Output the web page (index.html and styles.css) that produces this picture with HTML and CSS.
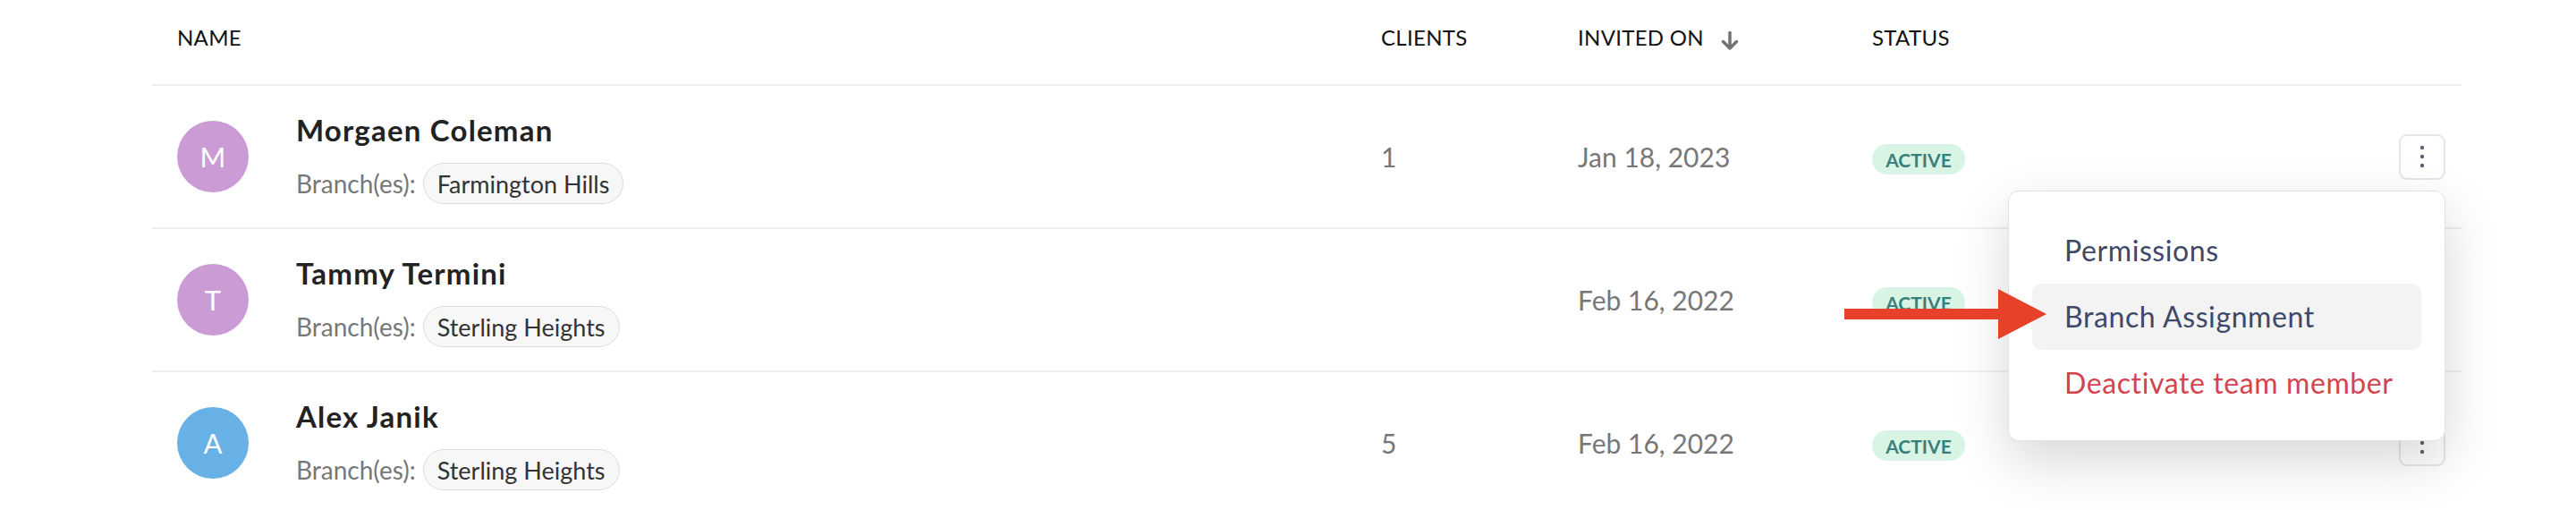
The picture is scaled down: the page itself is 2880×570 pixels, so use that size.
FILE: index.html
```html
<!DOCTYPE html>
<html lang="en">

<head>
    <meta charset="UTF-8">
    <meta name="viewport" content="width=device-width, initial-scale=1.0">
    <title>Team Members</title>
    <link rel="stylesheet" href="styles.css">
</head>

<body>

    <div id="team-table">
        <div class="row head-row">
            <div class="cell">NAME</div>
            <div class="cell">CLIENTS</div>
            <div class="cell">INVITED ON
                <svg class="sort-icon" width="22" height="22" viewBox="0 0 22 22">
                    <path d="M11 1.5 V19 M3.5 11.5 L11 19 L18.5 11.5" fill="none" stroke="#737373" stroke-width="3.5" stroke-linecap="round" stroke-linejoin="round" />
                </svg>
            </div>
            <div class="cell">STATUS</div>
            <div class="cell"></div>
        </div>

        <div class="row">
            <div class="cell member">
                <span class="avatar avatar-purple">M</span>
                <div class="member-info">
                    <div class="member-name">Morgaen Coleman</div>
                    <div class="member-branch">Branch(es): <span class="chip">Farmington Hills</span></div>
                </div>
            </div>
            <div class="cell muted">1</div>
            <div class="cell muted">Jan 18, 2023</div>
            <div class="cell"><span class="badge">ACTIVE</span></div>
            <div class="cell actions">
                <div class="actions-wrap">
                    <button class="kebab">
                        <svg width="6" height="26" viewBox="0 0 6 26">
                            <circle cx="3" cy="3" r="2.2" fill="#5b6377" />
                            <circle cx="3" cy="13" r="2.2" fill="#5b6377" />
                            <circle cx="3" cy="23" r="2.2" fill="#5b6377" />
                        </svg>
                    </button>
                    <div class="menu">
                        <div class="menu-item">Permissions</div>
                        <div class="menu-item hovered">Branch Assignment</div>
                        <div class="menu-item danger">Deactivate team member</div>
                    </div>
                </div>
            </div>
        </div>

        <div class="row">
            <div class="cell member">
                <span class="avatar avatar-purple">T</span>
                <div class="member-info">
                    <div class="member-name">Tammy Termini</div>
                    <div class="member-branch">Branch(es): <span class="chip">Sterling Heights</span></div>
                </div>
            </div>
            <div class="cell muted"></div>
            <div class="cell muted">Feb 16, 2022</div>
            <div class="cell"><span class="badge">ACTIVE</span></div>
            <div class="cell actions">
                <button class="kebab">
                    <svg width="6" height="26" viewBox="0 0 6 26">
                        <circle cx="3" cy="3" r="2.2" fill="#5b6377" />
                        <circle cx="3" cy="13" r="2.2" fill="#5b6377" />
                        <circle cx="3" cy="23" r="2.2" fill="#5b6377" />
                    </svg>
                </button>
            </div>
        </div>

        <div class="row">
            <div class="cell member">
                <span class="avatar avatar-blue">A</span>
                <div class="member-info">
                    <div class="member-name">Alex Janik</div>
                    <div class="member-branch">Branch(es): <span class="chip">Sterling Heights</span></div>
                </div>
            </div>
            <div class="cell muted">5</div>
            <div class="cell muted">Feb 16, 2022</div>
            <div class="cell"><span class="badge">ACTIVE</span></div>
            <div class="cell actions">
                <button class="kebab">
                    <svg width="6" height="26" viewBox="0 0 6 26">
                        <circle cx="3" cy="3" r="2.2" fill="#5b6377" />
                        <circle cx="3" cy="13" r="2.2" fill="#5b6377" />
                        <circle cx="3" cy="23" r="2.2" fill="#5b6377" />
                    </svg>
                </button>
            </div>
        </div>

        <!-- annotation arrow pointing at the menu item -->
        <svg class="pointer-arrow" width="226" height="56" viewBox="0 0 226 56">
            <rect x="0" y="22" width="174" height="12" fill="#e8412a" />
            <polygon points="172,0 226,28 172,56" fill="#e8412a" />
        </svg>
    </div>

</body>

</html>
```

FILE: styles.css
```css
body {
    margin: 0;
    padding: 0;
    background: #fff;
    font-family: 'Lato', 'Liberation Sans', sans-serif;
    color: #222;
}

#team-table {
    position: relative;
    margin-left: 170px;
    width: 2582px;
}

.row {
    display: grid;
    grid-template-columns: 1346px 220px 329px 1fr 70px;
    box-sizing: border-box;
    height: 160px;
    border-bottom: 2px solid #efefef;
}

.cell {
    display: flex;
    align-items: center;
    padding-left: 28px;
}

.head-row {
    height: 96px;
    padding-bottom: 11px;
    font-size: 24px;
    letter-spacing: 0.3px;
    color: #111;
}

.sort-icon {
    margin-left: 18px;
    margin-top: 8px;
}

.member {
    gap: 53px;
}

.avatar {
    width: 80px;
    height: 80px;
    border-radius: 50%;
    display: flex;
    align-items: center;
    justify-content: center;
    color: #fff;
    font-size: 31px;
    flex-shrink: 0;
}

.avatar-purple {
    background-color: #cb9bd6;
}

.avatar-blue {
    background-color: #67b1e7;
}

.member-info {
    display: flex;
    flex-direction: column;
    gap: 18px;
    margin-top: 4px;
}

.member-name {
    font-size: 33px;
    font-weight: 700;
    letter-spacing: 1.2px;
    line-height: 38px;
    color: #222;
}

.member-branch {
    display: flex;
    align-items: center;
    gap: 8px;
    font-size: 28px;
    color: #777;
}

.chip {
    height: 46px;
    box-sizing: border-box;
    display: inline-flex;
    align-items: center;
    padding: 0 15px;
    border: 1px solid #dcdcdc;
    border-radius: 23px;
    background-color: #f7f7f7;
    color: #333;
    font-size: 27px;
}

.muted {
    font-size: 30px;
    color: #777;
}

.badge {
    display: inline-flex;
    align-items: center;
    justify-content: center;
    width: 104px;
    height: 34px;
    margin-top: 6px;
    border-radius: 17px;
    background-color: #d8f4e4;
    color: #3b7f7b;
    font-size: 21px;
    font-weight: 700;
}

.actions {
    padding-left: 0;
    padding-right: 18px;
    justify-content: flex-end;
}

.actions-wrap {
    position: relative;
}

.kebab {
    width: 52px;
    height: 51px;
    display: flex;
    align-items: center;
    justify-content: center;
    background: #fff;
    border: 2px solid #e6e6e6;
    border-radius: 9px;
    padding: 0;
}

.menu {
    position: absolute;
    top: calc(100% + 12px);
    right: 0;
    z-index: 10;
    width: 489px;
    box-sizing: border-box;
    padding: 29px 26px 27px;
    background: #fff;
    border: 1px solid #e2e2e2;
    border-radius: 12px;
    box-shadow: 0 22px 60px rgba(0, 0, 0, 0.16);
}

.menu-item {
    height: 74px;
    display: flex;
    align-items: center;
    padding-left: 36px;
    border-radius: 10px;
    font-size: 32px;
    letter-spacing: 0.6px;
    color: #3e4868;
}

.menu-item.hovered {
    background-color: #f3f3f4;
}

.menu-item.danger {
    color: #d4434e;
}

.pointer-arrow {
    position: absolute;
    left: 1892px;
    top: 323px;
    z-index: 20;
}
```
